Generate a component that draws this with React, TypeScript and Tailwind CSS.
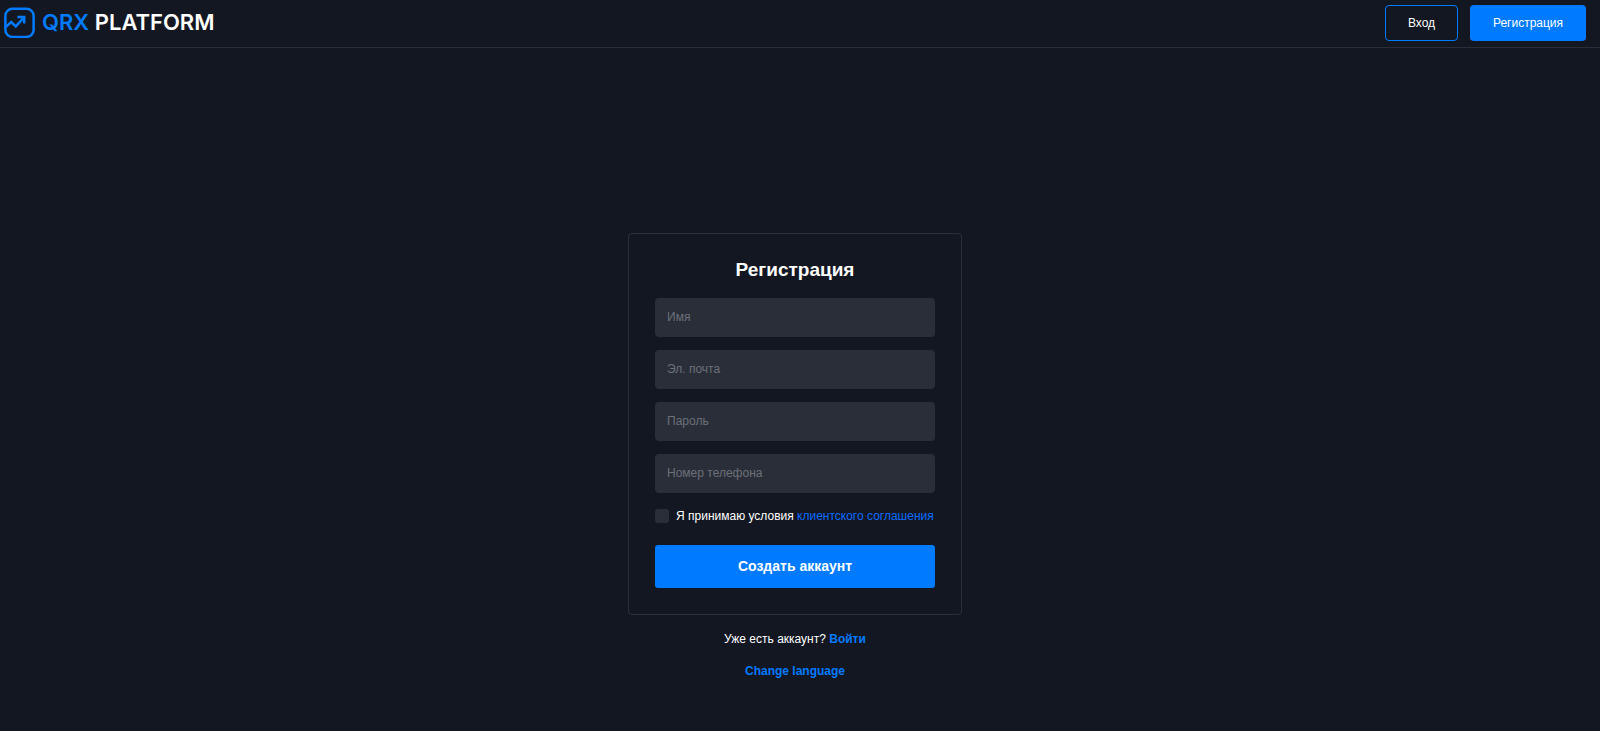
import React, { useState } from 'react';

interface TextFieldProps {
  name: string;
  label: string;
  type?: string;
  value: string;
  onChange: (e: React.ChangeEvent<HTMLInputElement>) => void;
}

const TextField: React.FC<TextFieldProps> = ({ name, label, type = 'text', value, onChange }) => (
  <input
    type={type}
    name={name}
    aria-label={label}
    placeholder={label}
    value={value}
    onChange={onChange}
    className="block w-full h-[39px] px-3 pb-px rounded bg-[#2a2e39] text-white text-[12px] placeholder-[#6a7078] focus:outline-none focus:ring-1 focus:ring-[#007bff]"
  />
);

const Logo = () => (
  <a href="#" className="flex items-center gap-[7px]">
    <svg className="w-[31px] h-[31px]" viewBox="0 0 31 31" fill="none" stroke="#007bff">
      <rect x="1.4" y="1.8" width="28.2" height="28.2" rx="7" strokeWidth="2.5" />
      <path d="M2 19.8 7.2 15 11.8 19.4 20 10.4" strokeWidth="2.5" />
      <path d="M13.4 10H20.2V16.6" strokeWidth="2.5" />
    </svg>
    <span className="pb-px font-['Inter',sans-serif] text-[22px] leading-8 font-semibold text-white">
      <span className="text-[#007bff]">QRX</span> PLATFORM
    </span>
  </a>
);

const App: React.FC = () => {
  const [form, setForm] = useState({ name: '', email: '', password: '', phone: '' });
  const [accepted, setAccepted] = useState(false);

  const handleChange = (e: React.ChangeEvent<HTMLInputElement>) => {
    const { name, value } = e.target;
    setForm(prev => ({ ...prev, [name]: value }));
  };

  return (
    <div className="min-h-screen flex flex-col bg-[#131722] text-white text-[12px] font-['Liberation_Sans',Arial,sans-serif]">
      <header className="flex items-center justify-between h-12 pl-1 pr-[14px] pb-[2px] border-b border-[#2a2e39]">
        <Logo />
        <nav className="flex gap-3">
          <button type="button" className="h-9 w-[73px] rounded border border-[#007bff] hover:bg-[#007bff]">
            Вход
          </button>
          <button type="button" className="h-9 w-[116px] rounded bg-[#007bff] hover:bg-[#0069d9]">
            Регистрация
          </button>
        </nav>
      </header>

      <main className="flex-1 flex flex-col items-center justify-end pr-[10px] pb-[52px]">
        <form
          onSubmit={e => e.preventDefault()}
          className="w-[334px] px-[26px] pt-[22px] pb-[26px] border border-[#2a2e39] rounded"
        >
          <h1 className="mb-[14px] text-center text-[19px] leading-7 font-bold">Регистрация</h1>
          <div className="flex flex-col gap-[13px]">
            <TextField name="name" label="Имя" value={form.name} onChange={handleChange} />
            <TextField name="email" label="Эл. почта" type="email" value={form.email} onChange={handleChange} />
            <TextField name="password" label="Пароль" type="password" value={form.password} onChange={handleChange} />
            <TextField name="phone" label="Номер телефона" type="tel" value={form.phone} onChange={handleChange} />
          </div>
          <div className="flex items-center gap-[7px] mt-[11px] mb-[17px] h-[24px] whitespace-nowrap">
            <input
              id="terms"
              type="checkbox"
              checked={accepted}
              onChange={e => setAccepted(e.target.checked)}
              className="appearance-none shrink-0 w-[14px] h-[14px] rounded-[3px] bg-[#2a2e39] checked:bg-[#007bff]"
            />
            <label htmlFor="terms">
              Я принимаю условия <a href="#" className="text-[#0a6cff]">клиентского соглашения</a>
            </label>
          </div>
          <button type="submit" className="w-full h-[43px] rounded-[3px] bg-[#007bff] hover:bg-[#0069d9] text-[14px] font-bold">
            Создать аккаунт
          </button>
        </form>
        <p className="mt-4 leading-4">
          Уже есть аккаунт? <a href="#" className="font-bold text-[#007bff]">Войти</a>
        </p>
        <button type="button" className="mt-4 leading-4 font-bold text-[#007bff]">Change language</button>
      </main>
    </div>
  );
};

export default App;
